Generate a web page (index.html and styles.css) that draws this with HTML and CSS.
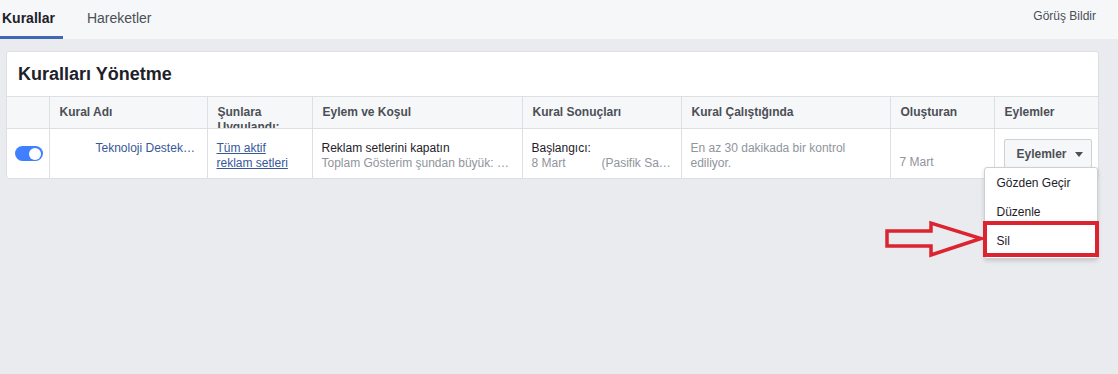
FILE: index.html
```html
<!DOCTYPE html>
<html lang="tr">
<head>
    <meta charset="UTF-8">
    <meta name="viewport" content="width=device-width, initial-scale=1.0">
    <title>Kuralları Yönetme</title>
    <link rel="stylesheet" href="styles.css">
</head>
<body>
    <div class="topbar">
        <div class="tabs">
            <div class="tab tab-active">Kurallar</div>
            <div class="tab">Hareketler</div>
        </div>
        <a class="feedback">Görüş Bildir</a>
    </div>

    <div class="page">
        <div class="card">
            <div class="card-title">Kuralları Yönetme</div>
            <table class="rules">
                <colgroup>
                    <col style="width:42px">
                    <col style="width:158px">
                    <col style="width:105px">
                    <col style="width:210px">
                    <col style="width:159px">
                    <col style="width:209px">
                    <col style="width:104px">
                    <col style="width:104px">
                </colgroup>
                <thead>
                    <tr>
                        <th><div class="th-in"></div></th>
                        <th><div class="th-in">Kural Adı</div></th>
                        <th><div class="th-in">Şunlara Uygulandı:</div></th>
                        <th><div class="th-in">Eylem ve Koşul</div></th>
                        <th><div class="th-in">Kural Sonuçları</div></th>
                        <th><div class="th-in">Kural Çalıştığında</div></th>
                        <th><div class="th-in">Oluşturan</div></th>
                        <th><div class="th-in">Eylemler</div></th>
                    </tr>
                </thead>
                <tbody>
                    <tr>
                        <td class="cell-toggle"><span class="toggle"></span></td>
                        <td class="cell-name"><a class="rule-name">Teknoloji Destek…</a></td>
                        <td><a class="link">Tüm aktif<br>reklam setleri</a></td>
                        <td class="nowrap">Reklam setlerini kapatın<div class="muted">Toplam Gösterim şundan büyük: …</div></td>
                        <td class="nowrap">Başlangıcı:<div class="muted">8 Mart<span class="gap"></span>(Pasifik Sa…</div></td>
                        <td class="muted">En az 30 dakikada bir kontrol ediliyor.</td>
                        <td class="muted cell-date">7 Mart</td>
                        <td class="cell-actions">
                            <div class="actions">
                                <button class="btn">Eylemler<span class="caret"></span></button>
                                <div class="menu">
                                    <div class="menu-item">Gözden Geçir</div>
                                    <div class="menu-item">Düzenle</div>
                                    <div class="menu-item">Sil</div>
                                </div>
                            </div>
                        </td>
                    </tr>
                </tbody>
            </table>
        </div>
    </div>

    <!-- annotation drawn over the screenshot -->
    <svg class="arrow" width="104" height="40" viewBox="0 0 104 40">
        <polygon points="4,11 48,11 48,3 98,18.5 48,35 48,26 4,26" fill="none" stroke="#dc2430" stroke-width="3.5" stroke-linejoin="miter"/>
    </svg>
    <div class="highlight"></div>
</body>
</html>
```

FILE: styles.css
```css
body {
    margin: 0;
    font-family: "Liberation Sans", Arial, sans-serif;
    font-size: 12px;
    color: #1d2129;
    background: #e9ebee;
    position: relative;
    min-height: 374px;
}
.topbar {
    height: 39px;
    background: #f6f7f9;
    display: flex;
    justify-content: space-between;
}
.tabs {
    display: flex;
    gap: 22px;
}
.tab {
    font-size: 14px;
    color: #4b4f56;
    line-height: 36px;
    padding: 0 8px 0 2px;
}
.tab-active {
    font-weight: bold;
    color: #1d2129;
    border-bottom: 3px solid #4267b2;
}
.feedback {
    color: #4b4f56;
    line-height: 32px;
    padding-right: 22px;
}
.page {
    padding: 12px 19px 0 6px;
}
.card {
    background: #fff;
    border: 1px solid #dddfe2;
    border-radius: 3px;
}
.card-title {
    height: 44px;
    line-height: 44px;
    padding-left: 11px;
    font-size: 18px;
    font-weight: bold;
}
.rules {
    width: 100%;
    border-collapse: collapse;
    table-layout: fixed;
    border-top: 1px solid #dddfe2;
}
th {
    padding: 0;
    background: #f6f7f9;
    text-align: left;
    font-weight: bold;
    color: #4b4f56;
    border-left: 1px solid #dddfe2;
    border-bottom: 1px solid #dddfe2;
    vertical-align: top;
}
th:first-child, td:first-child {
    border-left: none;
}
.th-in {
    height: 31px;
    box-sizing: border-box;
    padding: 8px 10px 0;
    line-height: 15px;
    overflow: hidden;
}
td {
    height: 49px;
    box-sizing: border-box;
    padding: 12px 9px 0;
    line-height: 15px;
    vertical-align: top;
    border-left: 1px solid #dddfe2;
}
.nowrap {
    white-space: nowrap;
}
.muted {
    color: #90949c;
}
.gap {
    display: inline-block;
    width: 36px;
}
.cell-toggle {
    text-align: center;
    padding: 17px 0 0 2px;
}
.toggle {
    display: inline-block;
    position: relative;
    width: 28px;
    height: 15px;
    border-radius: 8px;
    background: #4080ff;
    vertical-align: top;
}
.toggle::after {
    content: "";
    position: absolute;
    right: 2px;
    top: 1.5px;
    width: 12px;
    height: 12px;
    border-radius: 50%;
    background: #fff;
}
.cell-name {
    padding-left: 46px;
    white-space: nowrap;
}
.rule-name {
    color: #365899;
}
.link {
    color: #365899;
    text-decoration: underline;
}
.cell-date {
    padding-top: 26px;
}
.cell-actions {
    padding-top: 10px;
}
.actions {
    position: relative;
}
.btn {
    display: flex;
    align-items: center;
    width: 88px;
    height: 30px;
    padding: 0 0 0 12px;
    background: #f6f7f9;
    border: 1px solid #ced0d4;
    border-radius: 2px;
    font-family: inherit;
    font-size: 12px;
    font-weight: bold;
    color: #4b4f56;
    white-space: nowrap;
}
.caret {
    margin-left: 8px;
    border-left: 4px solid transparent;
    border-right: 4px solid transparent;
    border-top: 5px solid #4b4f56;
}
.menu {
    position: absolute;
    left: -20px;
    top: 28px;
    width: 112px;
    padding: 1px 0 2px;
    background: #fff;
    border: 1px solid #ccd0d5;
    border-radius: 3px;
    box-shadow: 0 2px 4px rgba(0, 0, 0, 0.15);
    z-index: 10;
}
.menu-item {
    height: 29px;
    line-height: 29px;
    padding-left: 12px;
    color: #1d2129;
}
.arrow {
    position: absolute;
    left: 883px;
    top: 220px;
    z-index: 20;
}
.highlight {
    position: absolute;
    left: 983px;
    top: 221px;
    width: 116px;
    height: 36px;
    box-sizing: border-box;
    border: 4px solid #dc2430;
    z-index: 20;
}
```
